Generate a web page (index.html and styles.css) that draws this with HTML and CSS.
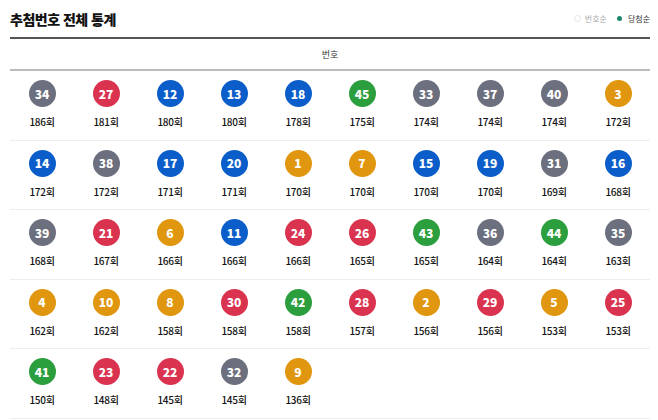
FILE: index.html
```html
<!DOCTYPE html>
<html lang="ko">
<head>
<meta charset="utf-8">
<link rel="stylesheet" href="styles.css">
</head>
<body>
<div class="page">
  <div class="top">
    <h1 class="title">추첨번호 전체 통계</h1>
    <div class="legend">
      <span class="opt"><span class="radio"></span>번호순</span>
      <span class="opt on"><span class="radio"></span>당첨순</span>
    </div>
  </div>
  <div class="table">
    <div class="head">번호</div>
    <div class="row">
      <div class="cell"><span class="ball gray">34</span><span class="cnt">186회</span></div>
      <div class="cell"><span class="ball red">27</span><span class="cnt">181회</span></div>
      <div class="cell"><span class="ball blue">12</span><span class="cnt">180회</span></div>
      <div class="cell"><span class="ball blue">13</span><span class="cnt">180회</span></div>
      <div class="cell"><span class="ball blue">18</span><span class="cnt">178회</span></div>
      <div class="cell"><span class="ball green">45</span><span class="cnt">175회</span></div>
      <div class="cell"><span class="ball gray">33</span><span class="cnt">174회</span></div>
      <div class="cell"><span class="ball gray">37</span><span class="cnt">174회</span></div>
      <div class="cell"><span class="ball gray">40</span><span class="cnt">174회</span></div>
      <div class="cell"><span class="ball yellow">3</span><span class="cnt">172회</span></div>
    </div>
    <div class="row">
      <div class="cell"><span class="ball blue">14</span><span class="cnt">172회</span></div>
      <div class="cell"><span class="ball gray">38</span><span class="cnt">172회</span></div>
      <div class="cell"><span class="ball blue">17</span><span class="cnt">171회</span></div>
      <div class="cell"><span class="ball blue">20</span><span class="cnt">171회</span></div>
      <div class="cell"><span class="ball yellow">1</span><span class="cnt">170회</span></div>
      <div class="cell"><span class="ball yellow">7</span><span class="cnt">170회</span></div>
      <div class="cell"><span class="ball blue">15</span><span class="cnt">170회</span></div>
      <div class="cell"><span class="ball blue">19</span><span class="cnt">170회</span></div>
      <div class="cell"><span class="ball gray">31</span><span class="cnt">169회</span></div>
      <div class="cell"><span class="ball blue">16</span><span class="cnt">168회</span></div>
    </div>
    <div class="row">
      <div class="cell"><span class="ball gray">39</span><span class="cnt">168회</span></div>
      <div class="cell"><span class="ball red">21</span><span class="cnt">167회</span></div>
      <div class="cell"><span class="ball yellow">6</span><span class="cnt">166회</span></div>
      <div class="cell"><span class="ball blue">11</span><span class="cnt">166회</span></div>
      <div class="cell"><span class="ball red">24</span><span class="cnt">166회</span></div>
      <div class="cell"><span class="ball red">26</span><span class="cnt">165회</span></div>
      <div class="cell"><span class="ball green">43</span><span class="cnt">165회</span></div>
      <div class="cell"><span class="ball gray">36</span><span class="cnt">164회</span></div>
      <div class="cell"><span class="ball green">44</span><span class="cnt">164회</span></div>
      <div class="cell"><span class="ball gray">35</span><span class="cnt">163회</span></div>
    </div>
    <div class="row">
      <div class="cell"><span class="ball yellow">4</span><span class="cnt">162회</span></div>
      <div class="cell"><span class="ball yellow">10</span><span class="cnt">162회</span></div>
      <div class="cell"><span class="ball yellow">8</span><span class="cnt">158회</span></div>
      <div class="cell"><span class="ball red">30</span><span class="cnt">158회</span></div>
      <div class="cell"><span class="ball green">42</span><span class="cnt">158회</span></div>
      <div class="cell"><span class="ball red">28</span><span class="cnt">157회</span></div>
      <div class="cell"><span class="ball yellow">2</span><span class="cnt">156회</span></div>
      <div class="cell"><span class="ball red">29</span><span class="cnt">156회</span></div>
      <div class="cell"><span class="ball yellow">5</span><span class="cnt">153회</span></div>
      <div class="cell"><span class="ball red">25</span><span class="cnt">153회</span></div>
    </div>
    <div class="row">
      <div class="cell"><span class="ball green">41</span><span class="cnt">150회</span></div>
      <div class="cell"><span class="ball red">23</span><span class="cnt">148회</span></div>
      <div class="cell"><span class="ball red">22</span><span class="cnt">145회</span></div>
      <div class="cell"><span class="ball gray">32</span><span class="cnt">145회</span></div>
      <div class="cell"><span class="ball yellow">9</span><span class="cnt">136회</span></div>
    </div>
  </div>
</div>
</body>
</html>
```

FILE: styles.css
```css
* { box-sizing: border-box; }
body {
  margin: 0;
  background: #fff;
  font-family: "Noto Sans CJK KR", "Noto Sans", sans-serif;
  color: #222;
}
.page {
  width: 640px;
  margin-left: 10px;
}
.top {
  height: 37px;
  display: flex;
  align-items: center;
  justify-content: space-between;
}
.title {
  margin: 0;
  font-size: 14px;
  font-weight: 900;
  letter-spacing: -0.5px;
  color: #111;
  line-height: 1;
}
.legend {
  display: flex;
  align-items: center;
  gap: 10px;
  font-size: 8px;
  color: #aaa;
}
.opt {
  display: flex;
  align-items: center;
  gap: 4px;
}
.opt.on { color: #333; }
.radio {
  width: 7px;
  height: 7px;
  border-radius: 50%;
  border: 1px solid #e4e4e4;
}
.opt.on .radio {
  width: 5px;
  height: 5px;
  border: none;
  background: #17876a;
  margin-right: 2px;
}
.table {
  border-top: 2px solid #555;
}
.head {
  height: 32px;
  border-bottom: 2px solid #bbb;
  display: flex;
  align-items: center;
  justify-content: center;
  font-size: 9px;
  color: #333;
}
.row {
  display: grid;
  grid-template-columns: repeat(10, 1fr);
  height: 69.5px;
  border-bottom: 1px solid #eee;
}
.cell {
  display: flex;
  flex-direction: column;
  align-items: center;
  padding-top: 9px;
}
.ball {
  width: 27px;
  height: 27px;
  border-radius: 50%;
  color: #fff;
  font-weight: 900;
  font-size: 12px;
  display: flex;
  align-items: center;
  justify-content: center;
  line-height: 1;
}
.cnt {
  margin-top: 9px;
  font-size: 10px;
  line-height: 12px;
  font-weight: 500;
  color: #111;
  letter-spacing: -0.3px;
}
.yellow { background: #e0960e; }
.blue { background: #0b5ec9; }
.red { background: #d93350; }
.gray { background: #6c6f7d; }
.green { background: #2b9e3e; }
```
